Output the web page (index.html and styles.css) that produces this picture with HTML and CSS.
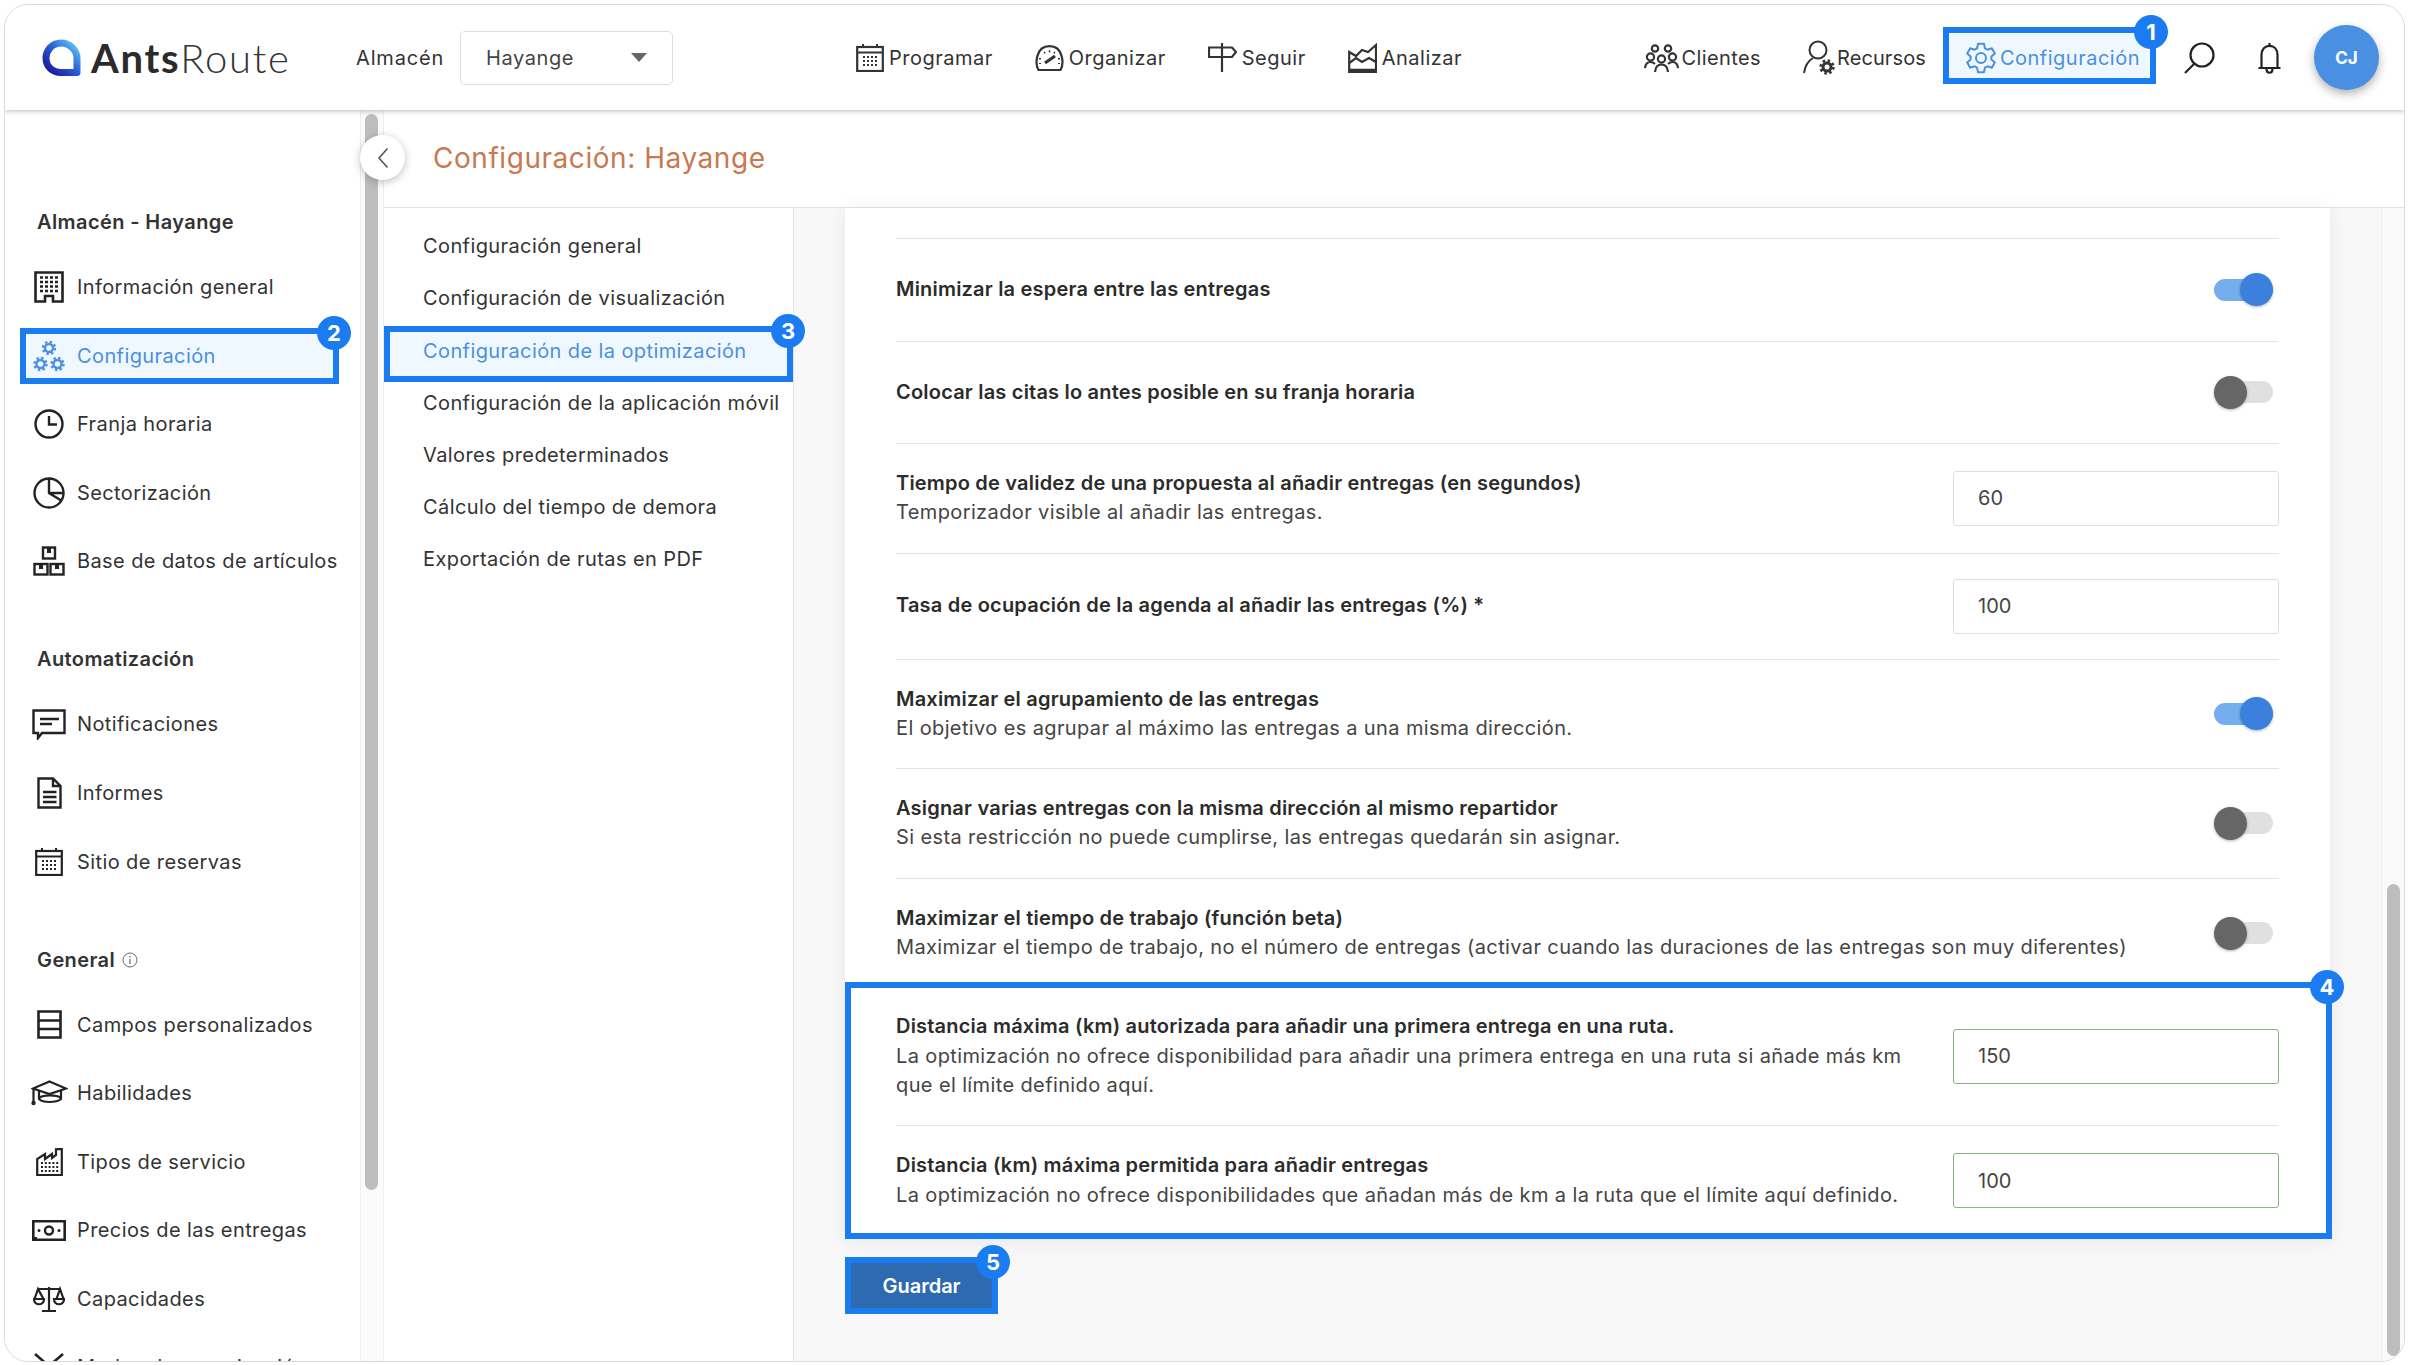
FILE: index.html
```html
<!DOCTYPE html>
<html lang="es">
<head>
<meta charset="utf-8">
<title>AntsRoute</title>
<link rel="stylesheet" href="styles.css">
</head>
<body>
<svg class="sprite" xmlns="http://www.w3.org/2000/svg">
  <symbol id="cog" viewBox="0 0 30 32"><path d="M11.1 6.3L12 1.8H18L18.9 6.3L21.5 7.7L25.8 6.3L28.8 11.5L25.4 14.5V17.5L28.8 20.5L25.8 25.7L21.5 24.3L18.9 25.7L18 30.2H12L11.1 25.7L8.5 24.3L4.2 25.7L1.2 20.5L4.6 17.5V14.5L1.2 11.5L4.2 6.3L8.5 7.7Z" fill="none" stroke="currentColor" stroke-width="2" stroke-linejoin="round"/><circle cx="15" cy="16" r="5" fill="none" stroke="currentColor" stroke-width="2"/></symbol>
  <symbol id="cal" viewBox="0 0 28 29"><g fill="none" stroke="currentColor"><rect x="1.2" y="4" width="25.6" height="24" stroke-width="2.2"/><path d="M1 9.5H27" stroke-width="2"/><path d="M7 1V5M21 1V5" stroke-width="2"/><path d="M7 14H23M7 18H23M7 22H23" stroke-width="2" stroke-dasharray="2 2"/></g></symbol>
  <symbol id="gauge" viewBox="0 0 29 26"><g fill="none" stroke="currentColor"><path d="M3.5 25C0 19 0.5 1.2 14.5 1.2S29 19 25.5 25Z" stroke-width="2.2"/><path d="M9 8A10 10 0 0 1 20 8M5 13V19M24 13V19" stroke-width="2" stroke-dasharray="1.5 3.5"/><path d="M10 18L20 11" stroke-width="3"/></g></symbol>
  <symbol id="sign" viewBox="0 0 29 29"><path d="M14 0V29M1 4.5H24L28 9L24 14H1Z" fill="none" stroke="currentColor" stroke-width="2.2"/></symbol>
  <symbol id="chart" viewBox="0 0 29 30"><g fill="none" stroke="currentColor" stroke-width="2.2"><path d="M1.2 29V9L8 13L14 7L20 9L28 2V29Z"/><path d="M1.2 20L8 15L14 19L21 15L28 19"/><path d="M1 27.5H28" stroke-width="3.4"/></g></symbol>
  <symbol id="people" viewBox="0 0 35 28"><g fill="none" stroke="currentColor" stroke-width="2.2"><circle cx="11" cy="4.5" r="3.2"/><circle cx="24" cy="4.5" r="3.2"/><circle cx="6.5" cy="13" r="3.6"/><circle cx="28.5" cy="13" r="3.6"/><circle cx="17.5" cy="15" r="3.6"/><path d="M1 24C1.5 20 4 18 6.5 18S10 19 11 20M34 24C33.5 20 31 18 28.5 18S25 19 24 20M11 28C11.5 23 14 20.5 17.5 20.5S23.5 23 24 28"/></g></symbol>
  <symbol id="persongear" viewBox="0 0 32 36"><g fill="none" stroke="currentColor"><circle cx="15" cy="10" r="8.5" stroke-width="2"/><path d="M1 33C2 26 5 21 10 18" stroke-width="2"/><circle cx="24" cy="27" r="4" stroke-width="3"/><circle cx="24" cy="27" r="6.4" stroke-width="2.6" stroke-dasharray="2.5 2.5"/></g></symbol>
  <symbol id="building" viewBox="0 0 30 32"><g fill="none" stroke="currentColor"><path d="M1.5 30.5V1.5H28.5V30.5H19V25H11V30.5Z" stroke-width="2.6"/><path d="M6 6.5H24M6 11H24M6 15.500H24M6 20H24" stroke-width="2.6" stroke-dasharray="3 2"/></g></symbol>
  <symbol id="gears" viewBox="0 0 32 32"><g fill="none" stroke="currentColor"><circle cx="16" cy="8" r="4" stroke-width="2.400"/><circle cx="16" cy="8" r="6" stroke-width="2.400" stroke-dasharray="2.400 2.300"/><circle cx="7.500" cy="24" r="4" stroke-width="2.400"/><circle cx="7.500" cy="24" r="6" stroke-width="2.400" stroke-dasharray="2.400 2.300"/><circle cx="24.500" cy="24" r="4" stroke-width="2.400"/><circle cx="24.500" cy="24" r="6" stroke-width="2.400" stroke-dasharray="2.400 2.300"/></g></symbol>
  <symbol id="clock" viewBox="0 0 30 30"><path d="M15 1.500A13.500 13.500 0 1 0 15 28.500A13.500 13.500 0 1 0 15 1.500ZM15 7V15.500H23" fill="none" stroke="currentColor" stroke-width="2.400"/></symbol>
  <symbol id="pie" viewBox="0 0 32 32"><path d="M16 1.500A14.500 14.500 0 1 0 16 30.500A14.500 14.500 0 1 0 16 1.500V16L29 24M16 16H30.500" fill="none" stroke="currentColor" stroke-width="2.400"/></symbol>
  <symbol id="boxes" viewBox="0 0 32 30"><g fill="none" stroke="currentColor" stroke-width="2.400"><rect x="10" y="1.500" width="12" height="11"/><rect x="1.500" y="18" width="13" height="10.500"/><rect x="17.500" y="18" width="13" height="10.500"/></g><path d="M14 2H18V7H14ZM6 18H10V23H6ZM22 18H26V23H22Z" fill="currentColor"/></symbol>
  <symbol id="chat" viewBox="0 0 34 31"><path d="M1.500 1.500H32.500V24H10L6 29V24H1.500Z" fill="none" stroke="currentColor" stroke-width="2.400"/><path d="M8 10H27M8 15H20" fill="none" stroke="currentColor" stroke-width="2.400"/></symbol>
  <symbol id="doc" viewBox="0 0 25 32"><path d="M1.500 1.500H16L23.500 9V30.500H1.500ZM16 1.500V9H23.500M6 15H19.500M6 20H19.500M6 25H19.500" fill="none" stroke="currentColor" stroke-width="2.400"/></symbol>
  <symbol id="rows" viewBox="0 0 25 29"><path d="M1.500 1.500H23.500V27.500H1.500ZM1.500 10.500H23.500M1.500 19H23.500" fill="none" stroke="currentColor" stroke-width="2.600"/></symbol>
  <symbol id="cap" viewBox="0 0 37 26"><g fill="none" stroke="currentColor" stroke-width="2.200"><path d="M18.500 1.500L35 8.500L18.500 14L2 8.500Z"/><path d="M8 11V19C12 23 25 23 30 19V11"/><path d="M8 18C13 14.500 25 14.500 30 18"/><path d="M2.500 9V22"/></g><circle cx="2.500" cy="23" r="2.200" fill="currentColor"/></symbol>
  <symbol id="factory" viewBox="0 0 27 28"><path d="M1.200 27V11L9 6V11L16 6V10L20 7V1.200L25.800 1V27Z" fill="none" stroke="currentColor" stroke-width="2.200"/><path d="M5 15H23M5 19H23M5 23H23" fill="none" stroke="currentColor" stroke-width="2" stroke-dasharray="2 1.800"/></symbol>
  <symbol id="money" viewBox="0 0 34 21"><path d="M1.300 1.300H32.700V19.700H1.300Z" fill="none" stroke="currentColor" stroke-width="2.600"/><circle cx="17" cy="10.500" r="4" fill="none" stroke="currentColor" stroke-width="2.400"/><circle cx="7" cy="10.500" r="1.500" fill="currentColor"/><circle cx="27" cy="10.500" r="1.500" fill="currentColor"/><path d="M0 17H5V21H0Z" fill="currentColor"/></symbol>
  <symbol id="scale" viewBox="0 0 32 26"><path d="M16 1V24M9 25H23M5 3H27M5 3L1.500 13H10.500ZM27 3L23.500 13H30.500Z" fill="none" stroke="currentColor" stroke-width="2.200"/><path d="M1 13H11C11 20 1 20 1 13ZM21 13H31C31 20 21 20 21 13Z" fill="none" stroke="currentColor" stroke-width="2.200"/></symbol>
  <symbol id="scissors" viewBox="0 0 32 30"><path d="M2 2L16 14L30 2" fill="none" stroke="currentColor" stroke-width="2.600"/></symbol>
</svg>

<div class="frame">
  <header class="topbar">
    <div class="logo">
      <svg width="39" height="38" viewBox="0 0 39 38">
        <defs><linearGradient id="logoGrad" x1="0.1" y1="0.9" x2="0.9" y2="0.1"><stop offset="0" stop-color="#1c1f9e"/><stop offset="0.55" stop-color="#2a62d8"/><stop offset="1" stop-color="#58b4f4"/></linearGradient></defs>
        <path d="M19 4C9.500 4 4 12 4 19C4 28 11 33.500 19 33.500H35V19C35 12 28.500 4 19 4Z" fill="none" stroke="url(#logoGrad)" stroke-width="7" stroke-linejoin="round"/>
      </svg>
      <span class="logo-text"><b>Ants</b>Route</span>
    </div>
    <span class="wh-label">Almacén</span>
    <div class="select"><span>Hayange</span><i class="select-arrow"></i></div>

    <nav class="nav-main">
      <a class="nav-item"><svg width="28" height="29"><use href="#cal"/></svg><span>Programar</span></a>
      <a class="nav-item"><svg width="29" height="26"><use href="#gauge"/></svg><span>Organizar</span></a>
      <a class="nav-item"><svg width="29" height="29"><use href="#sign"/></svg><span>Seguir</span></a>
      <a class="nav-item"><svg width="29" height="30"><use href="#chart"/></svg><span>Analizar</span></a>
    </nav>

    <nav class="nav-right">
      <a class="nav-item nav-clients"><svg width="35" height="28"><use href="#people"/></svg><span>Clientes</span></a>
      <a class="nav-item nav-resources"><svg width="32" height="36"><use href="#persongear"/></svg><span>Recursos</span></a>
      <a class="nav-item nav-active"><svg width="30" height="32"><use href="#cog"/></svg><span>Configuración</span><em class="badge">1</em></a>
      <svg class="search" width="32" height="32" viewBox="0 0 32 32"><circle cx="19" cy="13" r="11.500" fill="none" stroke="currentColor" stroke-width="2.200"/><path d="M11 22L2 31" stroke="currentColor" stroke-width="2.200"/></svg>
      <svg class="bell" width="25" height="32" viewBox="0 0 25 32"><path d="M12.500 1V4M4.500 25V13C4.500 7 8 3.800 12.500 3.800S20.500 7 20.500 13V25M1.500 26H23.500" fill="none" stroke="currentColor" stroke-width="2.200"/><path d="M9.500 27C9.500 32 15.500 32 15.500 27" fill="none" stroke="currentColor" stroke-width="2.200"/></svg>
      <div class="avatar">CJ</div>
    </nav>
  </header>

  <div class="main">
    <aside class="sidebar">
      <section class="side-group side-first">
        <h3 class="side-title">Almacén - Hayange</h3>
        <a class="side-item"><span class="side-ico"><svg width="30" height="32"><use href="#building"/></svg></span>Información general</a>
        <a class="side-item side-active"><span class="side-ico"><svg width="32" height="32"><use href="#gears"/></svg></span>Configuración<em class="badge">2</em></a>
        <a class="side-item"><span class="side-ico"><svg width="30" height="30"><use href="#clock"/></svg></span>Franja horaria</a>
        <a class="side-item"><span class="side-ico"><svg width="32" height="32"><use href="#pie"/></svg></span>Sectorización</a>
        <a class="side-item"><span class="side-ico"><svg width="32" height="30"><use href="#boxes"/></svg></span>Base de datos de artículos</a>
      </section>
      <section class="side-group">
        <h3 class="side-title">Automatización</h3>
        <a class="side-item"><span class="side-ico"><svg width="34" height="31"><use href="#chat"/></svg></span>Notificaciones</a>
        <a class="side-item"><span class="side-ico"><svg width="25" height="32"><use href="#doc"/></svg></span>Informes</a>
        <a class="side-item"><span class="side-ico"><svg width="28" height="29"><use href="#cal"/></svg></span>Sitio de reservas</a>
      </section>
      <section class="side-group">
        <h3 class="side-title">General <svg class="info" width="16" height="16" viewBox="0 0 16 16"><circle cx="8" cy="8" r="7" fill="none" stroke="currentColor"/><path d="M8 7V12M8 4V5.500" stroke="currentColor" stroke-width="1.200"/></svg></h3>
        <a class="side-item"><span class="side-ico"><svg width="25" height="29"><use href="#rows"/></svg></span>Campos personalizados</a>
        <a class="side-item"><span class="side-ico"><svg width="37" height="26"><use href="#cap"/></svg></span>Habilidades</a>
        <a class="side-item"><span class="side-ico"><svg width="27" height="28"><use href="#factory"/></svg></span>Tipos de servicio</a>
        <a class="side-item"><span class="side-ico"><svg width="34" height="21"><use href="#money"/></svg></span>Precios de las entregas</a>
        <a class="side-item"><span class="side-ico"><svg width="32" height="26"><use href="#scale"/></svg></span>Capacidades</a>
        <a class="side-item"><span class="side-ico"><svg width="32" height="30"><use href="#scissors"/></svg></span>Modos de organización</a>
      </section>
    </aside>
    <div class="side-scroll"><div class="side-thumb"></div></div>

    <div class="workspace">
      <button class="collapse" type="button"><svg width="12" height="22" viewBox="0 0 12 22"><path d="M10.500 1.500L2 11L10.500 20.500" fill="none" stroke="#555" stroke-width="1.600"/></svg></button>
      <div class="title-row"><h1 class="page-title">Configuración: Hayange</h1></div>
      <div class="work-body">
        <nav class="subnav">
          <a class="sub-item">Configuración general</a>
          <a class="sub-item">Configuración de visualización</a>
          <a class="sub-item sub-active">Configuración de la optimización<em class="badge">3</em></a>
          <a class="sub-item">Configuración de la aplicación móvil</a>
          <a class="sub-item">Valores predeterminados</a>
          <a class="sub-item">Cálculo del tiempo de demora</a>
          <a class="sub-item">Exportación de rutas en PDF</a>
        </nav>
        <main class="content">
          <div class="card">
            <div class="row row-switch">
              <div class="row-text"><strong>Minimizar la espera entre las entregas</strong></div>
              <span class="switch switch-on"></span>
            </div>
            <div class="row row-switch">
              <div class="row-text"><strong>Colocar las citas lo antes posible en su franja horaria</strong></div>
              <span class="switch"></span>
            </div>
            <div class="row">
              <div class="row-text"><strong>Tiempo de validez de una propuesta al añadir entregas (en segundos)</strong><p>Temporizador visible al añadir las entregas.</p></div>
              <input class="field" type="text" value="60">
            </div>
            <div class="row">
              <div class="row-text"><strong>Tasa de ocupación de la agenda al añadir las entregas (%) *</strong></div>
              <input class="field" type="text" value="100">
            </div>
            <div class="row">
              <div class="row-text"><strong>Maximizar el agrupamiento de las entregas</strong><p>El objetivo es agrupar al máximo las entregas a una misma dirección.</p></div>
              <span class="switch switch-on"></span>
            </div>
            <div class="row">
              <div class="row-text"><strong>Asignar varias entregas con la misma dirección al mismo repartidor</strong><p>Si esta restricción no puede cumplirse, las entregas quedarán sin asignar.</p></div>
              <span class="switch"></span>
            </div>
            <div class="row row-before-box">
              <div class="row-text row-text-wide"><strong>Maximizar el tiempo de trabajo (función beta)</strong><p>Maximizar el tiempo de trabajo, no el número de entregas (activar cuando las duraciones de las entregas son muy diferentes)</p></div>
              <span class="switch"></span>
            </div>
            <div class="box">
              <em class="badge">4</em>
              <div class="row row-box-first">
                <div class="row-text"><strong>Distancia máxima (km) autorizada para añadir una primera entrega en una ruta.</strong><p>La optimización no ofrece disponibilidad para añadir una primera entrega en una ruta si añade más km que el límite definido aquí.</p></div>
                <input class="field field-ok" type="text" value="150">
              </div>
              <div class="row row-box-last">
                <div class="row-text"><strong>Distancia (km) máxima permitida para añadir entregas</strong><p>La optimización no ofrece disponibilidades que añadan más de km a la ruta que el límite aquí definido.</p></div>
                <input class="field field-ok" type="text" value="100">
              </div>
            </div>
          </div>
          <button class="save" type="button">Guardar<em class="badge">5</em></button>
        </main>
        <div class="content-scroll"><div class="content-thumb"></div></div>
      </div>
    </div>
  </div>
</div>
</body>
</html>
```
FILE: styles.css
```css
* { box-sizing: border-box; }
html, body { margin: 0; padding: 0; background: #fff; }
body { font-family: Inter, "Open Sans", sans-serif; font-size: 20px; color: #333; overflow: hidden; height: 1365px; }
.sprite { display: none; }
a { color: inherit; text-decoration: none; }
svg { display: block; flex-shrink: 0; }

.frame {
  width: 2401px; height: 1358px; margin: 4px 0 0 4px;
  border: 1px solid #d9d9d9; border-radius: 24px;
  overflow: hidden; display: flex; flex-direction: column; background: #fff;
}

.badge {
  position: absolute; top: -18px; right: -18px; width: 34px; height: 34px;
  border-radius: 50%; background: #1a7cf0; color: #fff;
  font: 700 22px/34px Inter, sans-serif; text-align: center; letter-spacing: 0;
  z-index: 5;
}

/* top bar */
.topbar {
  flex: 0 0 105px; display: flex; align-items: center; padding-left: 37px;
  background: #fff; box-shadow: 0 1px 5px rgba(0,0,0,.28); position: relative; z-index: 3;
}
.logo { display: flex; align-items: center; gap: 10px; width: 314px; }
.logo-text { font: 300 40px/1 Lato, sans-serif; color: #333; letter-spacing: 1.7px; }
.logo-text b { font-weight: 700; color: #2b2b2b; }
.wh-label { width: 104px; letter-spacing: .85px; }
.select {
  width: 213px; height: 54px; border: 1.5px solid #ddd; border-radius: 5px;
  display: flex; align-items: center; justify-content: space-between;
  padding: 0 25px; letter-spacing: .6px; color: #444;
}
.select-arrow { width: 0; height: 0; border-left: 8px solid transparent; border-right: 8px solid transparent; border-top: 9px solid #666; }
.nav-main { display: flex; align-items: center; gap: 42px; margin-left: 183px; }
.nav-item { display: flex; align-items: center; gap: 5px; letter-spacing: .5px; color: #333; }
.nav-right { display: flex; align-items: center; margin-left: auto; padding-right: 25px; gap: 42px; }
.nav-right .nav-item { gap: 2px; }
.nav-right .nav-clients { letter-spacing: .4px; }
.nav-right .nav-resources { letter-spacing: .1px; }
.nav-right .nav-active {
  position: relative; margin-left: -25px; margin-bottom: 5px; height: 57px; padding: 5px 10px 0 17px; gap: 4px;
  border: 6px solid #1a7cf0; background: #f0f8ff; color: #4a90e2; letter-spacing: .5px;
}
.search, .bell { color: #222; }
.search { margin-left: -15px; }
.avatar {
  width: 65px; height: 65px; border-radius: 50%; background: #4a90e2; color: #fff;
  font-weight: 700; font-size: 17px; display: flex; align-items: center; justify-content: center;
  box-shadow: 0 4px 10px rgba(0,0,0,.3); margin-left: -10px;
}

/* layout */
.main { flex: 1; display: flex; min-height: 0; }
.sidebar { flex: 0 0 355px; padding: 97px 0 0 15px; overflow: hidden; background: #fff; }
.side-scroll { flex: 0 0 24px; background: #fbfbfb; border-left: 1px solid #eee; border-right: 1px solid #eee; padding: 4px 0 0 4px; }
.side-thumb { width: 13px; height: 1076px; background: #bdbdbd; border-radius: 7px; }
.side-group { margin-top: 55px; display: flex; flex-direction: column; gap: 12.6px; }
.side-first { margin-top: 0; }
.side-title { margin: 0 0 9.4px; padding-left: 17px; font-size: 20px; line-height: 30px; font-weight: 600; color: #333; letter-spacing: .4px; display: flex; align-items: center; gap: 7px; }
.info { color: #666; }
.side-item {
  position: relative; display: flex; align-items: center; gap: 11px; flex-shrink: 0;
  width: 319px; height: 56px; padding-left: 6px;
  border: 6px solid transparent; letter-spacing: .4px; white-space: nowrap; color: #333;
}
.side-ico { width: 34px; flex-shrink: 0; display: flex; justify-content: center; color: #222; }
.side-active { border-color: #1a7cf0; background: #f0f8ff; color: #4a90e2; }
.side-active .side-ico { color: #4a90e2; }

.workspace { flex: 1; min-width: 0; display: flex; flex-direction: column; position: relative; }
.collapse {
  position: absolute; left: -24px; top: 25px; width: 45px; height: 45px; padding: 0;
  border: 0; border-radius: 50%; background: #fff; box-shadow: 0 2px 8px rgba(0,0,0,.25);
  display: flex; align-items: center; justify-content: center; z-index: 2;
}
.title-row { flex: 0 0 98px; display: flex; align-items: center; padding: 0 0 2px 49px; border-bottom: 1.5px solid #e4e4e4; }
.page-title { margin: 0; font-size: 28px; font-weight: 400; color: #c8794e; letter-spacing: .55px; }
.work-body { flex: 1; min-height: 0; display: flex; }

.subnav { flex: 0 0 410px; padding-top: 12px; border-right: 1.5px solid #e4e4e4; }
.sub-item { position: relative; display: flex; align-items: center; height: 52.2px; padding-left: 39px; letter-spacing: .4px; white-space: nowrap; color: #333; }
.sub-active { height: 56px; margin: 1.6px 0 -5.4px; padding: 0 0 6px 33px; border: 6px solid #1a7cf0; background: #f0f8ff; color: #4a90e2; }

.content { flex: 1; min-width: 0; background: #f8f8f8; padding-left: 51px; }
.content-scroll { flex: 0 0 23px; background: #fafafa; border-left: 1px solid #eee; padding: 676px 0 0 5px; }
.content-thumb { width: 13px; height: 472px; background: #bdbdbd; border-radius: 7px; }

.card { width: 1485px; padding: 30px 51px 0; background: #fff; box-shadow: 0 2px 20px rgba(0,0,0,.07); }
.row { display: flex; align-items: center; justify-content: space-between; padding: 25px 0; border-top: 1px solid #e4e4e4; }
.row-switch { min-height: 102.5px; }
.row-text { width: 1030px; font-size: 20px; line-height: 29.3px; letter-spacing: .2px; }
.row-text-wide { width: auto; }
.row-text strong { display: block; font-weight: 600; color: #2b2b2b; }
.row-text p { margin: 0; color: #444; letter-spacing: .38px; }
.row-before-box { padding-bottom: 19.6px; }
.box {
  position: relative; margin: 0 -53px 0 -51px; padding: 0 47px 0 45px;
  border: 6px solid #1a7cf0; background: #fff;
}
.row-box-first { border-top: 0; padding-top: 24.5px; }
.row-box-last { padding-bottom: 23px; }

.field {
  width: 326px; height: 55px; flex-shrink: 0; padding: 0 24px;
  border: 1.5px solid #ddd; border-radius: 3px; background: #fff;
  font: 400 20px Inter, sans-serif; color: #444; outline: 0;
}
.field-ok { border-color: #84b47c; }

.switch { position: relative; width: 59px; height: 33px; flex-shrink: 0; margin-right: 6px; }
.switch::before { content: ""; position: absolute; left: 0; right: 0; top: 5.5px; height: 22px; border-radius: 11px; background: #e0e0e0; }
.switch::after { content: ""; position: absolute; left: 0; top: 0; width: 33px; height: 33px; border-radius: 50%; background: #666; box-shadow: 0 1px 3px rgba(0,0,0,.3); }
.switch-on::before { background: #74aeed; }
.switch-on::after { left: 26px; background: #3a80dc; }

.save {
  position: relative; display: block; width: 153px; height: 57px; margin-top: 18px; padding: 2px 0 0;
  border: 6px solid #1a7cf0; background: #2e6ab0; color: #fff;
  font: 600 20px Inter, sans-serif;
}
```
